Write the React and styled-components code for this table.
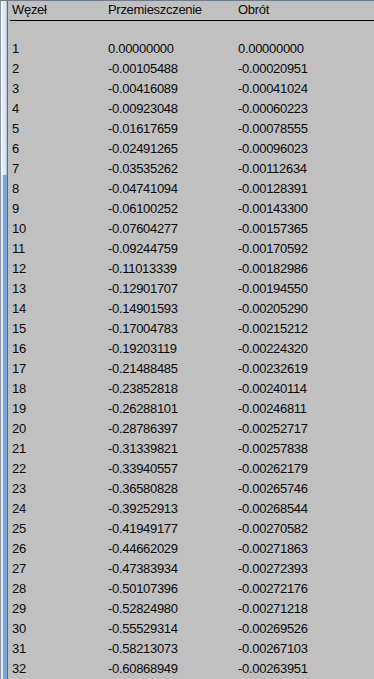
import React from "react";
import styled, { createGlobalStyle } from "styled-components";

const Global = createGlobalStyle`
  html, body { margin: 0; padding: 0; }
  body {
    background: #c0c0c0;
    width: 374px;
    height: 679px;
    overflow: hidden;
    font-family: "Liberation Sans", Arial, sans-serif;
  }
`;

const Window = styled.div`
  display: flex;
  width: 374px;
  height: 679px;
  border-top: 1px solid #6b7a90;
  box-sizing: border-box;
  background: #c0c0c0;
`;

const Edge = styled.div`
  display: flex;
  flex-direction: column;
  width: 8px;
  flex: none;
`;

const EdgePart = styled.div`
  height: ${(p) => (p.$thumb ? "auto" : "174px")};
  flex: ${(p) => (p.$thumb ? "1" : "none")};
  background: ${(p) =>
    p.$thumb
      ? "linear-gradient(to right, #8a95a6 0 1px, #dfe8f3 1px 3px, #7ba5d8 3px 7px, #5f6b7a 7px 8px)"
      : "linear-gradient(to right, #8a95a6 0 1px, #f3f6fb 1px 3px, #dbe6f3 3px 6px, #b4c8e0 6px 7px, #5f6b7a 7px 8px)"};
`;

const Content = styled.div`
  flex: 1;
  padding-left: 2px;
  display: flex;
  flex-direction: column;
`;

const Row = styled.div`
  display: grid;
  grid-template-columns: 96px 130px 1fr;
  padding-left: 2px;
  height: ${(p) => (p.$header ? "18px" : "20px")};
  line-height: ${(p) => (p.$header ? "18px" : "20px")};
  font-size: 13px;
  letter-spacing: -0.3px;
  color: #0a0a0a;
  white-space: nowrap;
`;

const Cell = styled.span``;

const Rule = styled.div`
  height: 2px;
  margin-top: 1px;
  background: #000;
`;

const Spacer = styled.div`
  height: 18px;
  flex: none;
`;

const data = [
  ["1", "0.00000000", "0.00000000"],
  ["2", "-0.00105488", "-0.00020951"],
  ["3", "-0.00416089", "-0.00041024"],
  ["4", "-0.00923048", "-0.00060223"],
  ["5", "-0.01617659", "-0.00078555"],
  ["6", "-0.02491265", "-0.00096023"],
  ["7", "-0.03535262", "-0.00112634"],
  ["8", "-0.04741094", "-0.00128391"],
  ["9", "-0.06100252", "-0.00143300"],
  ["10", "-0.07604277", "-0.00157365"],
  ["11", "-0.09244759", "-0.00170592"],
  ["12", "-0.11013339", "-0.00182986"],
  ["13", "-0.12901707", "-0.00194550"],
  ["14", "-0.14901593", "-0.00205290"],
  ["15", "-0.17004783", "-0.00215212"],
  ["16", "-0.19203119", "-0.00224320"],
  ["17", "-0.21488485", "-0.00232619"],
  ["18", "-0.23852818", "-0.00240114"],
  ["19", "-0.26288101", "-0.00246811"],
  ["20", "-0.28786397", "-0.00252717"],
  ["21", "-0.31339821", "-0.00257838"],
  ["22", "-0.33940557", "-0.00262179"],
  ["23", "-0.36580828", "-0.00265746"],
  ["24", "-0.39252913", "-0.00268544"],
  ["25", "-0.41949177", "-0.00270582"],
  ["26", "-0.44662029", "-0.00271863"],
  ["27", "-0.47383934", "-0.00272393"],
  ["28", "-0.50107396", "-0.00272176"],
  ["29", "-0.52824980", "-0.00271218"],
  ["30", "-0.55529314", "-0.00269526"],
  ["31", "-0.58213073", "-0.00267103"],
  ["32", "-0.60868949", "-0.00263951"],
];

export default function App() {
  return (
    <>
      <Global />
      <Window>
        <Edge>
          <EdgePart />
          <EdgePart $thumb />
        </Edge>
        <Content>
          <Row $header>
            <Cell>Węzeł</Cell>
            <Cell>Przemieszczenie</Cell>
            <Cell>Obrót</Cell>
          </Row>
          <Rule />
          <Spacer />
          {data.map((r) => (
            <Row key={r[0]}>
              <Cell>{r[0]}</Cell>
              <Cell>{r[1]}</Cell>
              <Cell>{r[2]}</Cell>
            </Row>
          ))}
        </Content>
      </Window>
    </>
  );
}
